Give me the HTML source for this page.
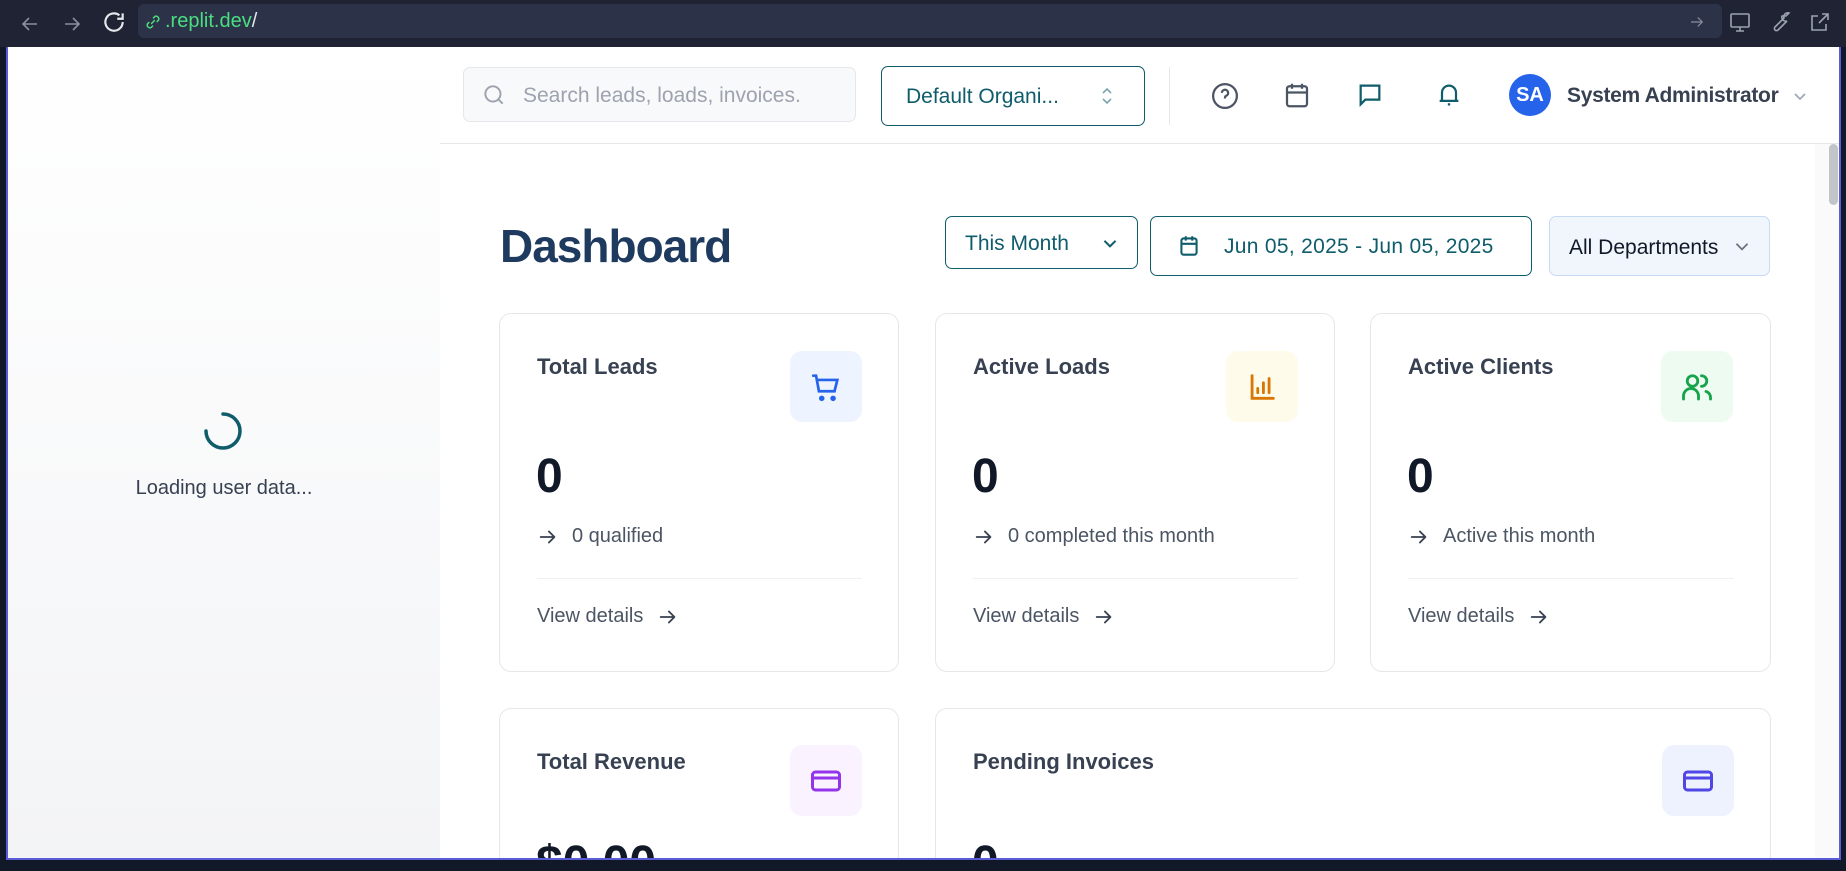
<!DOCTYPE html>
<html><head><meta charset="utf-8"><style>
*{box-sizing:border-box;margin:0;padding:0}
html,body{width:1846px;height:871px;overflow:hidden}
body{background:#111827;font-family:"Liberation Sans",sans-serif;position:relative}
.abs{position:absolute}
#chrome{left:0;top:0;width:1846px;height:47px;background:#1f2333}
#url{left:138px;top:4px;width:1584px;height:34px;background:#2c3247;border-radius:6px}
#page{left:6px;top:47px;width:1835px;height:813px;background:#fff;border-left:2px solid #5b5bd6;border-right:2px solid #5b5bd6;border-bottom:2px solid #5b5bd6;overflow:hidden}
#left{left:0;top:0;width:432px;height:813px;background:linear-gradient(#fff,#f3f4f6)}
.card{position:absolute;background:#fff;border:1px solid #e5e7eb;border-radius:12px}
.ct{position:absolute;left:37px;top:40px;font-size:22px;font-weight:bold;color:#374151}
.ib{position:absolute;width:72px;height:71px;border-radius:12px;display:flex;align-items:center;justify-content:center}
.num{position:absolute;left:36px;top:135px;font-size:48px;font-weight:bold;color:#111827}
.sub{position:absolute;left:37px;top:211px;font-size:20px;color:#4b5563;display:flex;align-items:center}
.hr{position:absolute;left:37px;right:36px;top:264px;border-top:1px solid #eef0f2}
.vd{position:absolute;left:37px;top:291px;font-size:20px;color:#4b5563;display:flex;align-items:center}
.txt{white-space:nowrap}
.ar{width:22px;height:22px}
</style></head><body>
<svg width="0" height="0" style="position:absolute"><defs><symbol id="arr" viewBox="0 0 24 24"><path d="M4 12h15M13 6l6 6-6 6" fill="none" stroke="#374151" stroke-width="2" stroke-linecap="round" stroke-linejoin="round"/></symbol></defs></svg>
<div id="chrome" class="abs"></div>
<div id="url" class="abs"></div>
<svg class="abs" style="left:18px;top:12px" width="24" height="24" viewBox="0 0 24 24" fill="none" stroke="#8a8fa0" stroke-width="1.6"><path d="M19 12H5M11 6l-6 6 6 6"/></svg>
<svg class="abs" style="left:60px;top:12px" width="24" height="24" viewBox="0 0 24 24" fill="none" stroke="#8a8fa0" stroke-width="1.6"><path d="M5 12h14M13 6l6 6-6 6"/></svg>
<svg class="abs" style="left:101px;top:9px" width="26" height="26" viewBox="0 0 24 24" fill="none" stroke="#e5e7eb" stroke-width="2"><path d="M20 12a8 8 0 1 1-3-6.2M20 4v5h-5"/></svg>
<svg class="abs" style="left:142px;top:11px" width="22" height="22" viewBox="0 0 24 24" fill="none" stroke="#4ade80" stroke-width="1.6"><path d="M10 14l4-4M8 12l-2 2a3 3 0 0 0 4 4l2-2M16 12l2-2a3 3 0 0 0-4-4l-2 2"/></svg>
<div class="abs txt" style="left:165px;top:10px;font-size:20px;color:#4ade80">.replit.dev<span style="color:#e5e7eb">/</span></div>
<svg class="abs" style="left:1688px;top:13px" width="18" height="18" viewBox="0 0 24 24" fill="none" stroke="#8a8fa0" stroke-width="1.6"><path d="M4 12h15M13 6l6 6-6 6"/></svg>
<svg class="abs" style="left:1728px;top:10px" width="24" height="24" viewBox="0 0 24 24" fill="none" stroke="#9ca3af" stroke-width="1.6"><rect x="3" y="4" width="18" height="13" rx="1"/><path d="M12 17v4M8 21h8"/></svg>
<svg class="abs" style="left:1768px;top:10px" width="24" height="24" viewBox="0 0 24 24" fill="none" stroke="#9ca3af" stroke-width="1.6"><path d="M14 6a4 4 0 0 0 5 5l-9 9a2 2 0 0 1-3-3l9-9a4 4 0 0 1 5-5l-3 3z"/></svg>
<svg class="abs" style="left:1808px;top:10px" width="24" height="24" viewBox="0 0 24 24" fill="none" stroke="#9ca3af" stroke-width="1.6"><path d="M14 4h6v6M20 4l-9 9M18 14v6H4V6h6"/></svg>

<div id="page" class="abs">
 <div id="left" class="abs"></div>
 <svg class="abs" style="left:194px;top:363px" width="42" height="42" viewBox="0 0 42 42" fill="none" stroke="#0f5c6b" stroke-width="3.5" stroke-linecap="round"><path d="M21 4a17 17 0 1 1-17 17"/></svg>
 <div class="abs txt" style="left:0;width:432px;text-align:center;top:430px;font-size:20px;color:#374151">Loading user data...</div>

 <div class="abs" style="left:432px;top:96px;width:1400px;border-top:1px solid #e5e7eb"></div>
 <div class="abs" style="left:455px;top:20px;width:393px;height:55px;background:#f8f9fb;border:1px solid #e5e7eb;border-radius:7px"></div>
 <svg class="abs" style="left:473px;top:35px" width="26" height="26" viewBox="0 0 24 24" fill="none" stroke="#9ca3af" stroke-width="1.8"><circle cx="11" cy="11" r="7"/><path d="M16 16l4 4"/></svg>
 <div class="abs txt" style="left:515px;top:37px;font-size:21px;color:#9ca3af">Search leads, loads, invoices.</div>
 <div class="abs" style="left:873px;top:19px;width:264px;height:60px;border:1.5px solid #0f5c6b;border-radius:7px"></div>
 <div class="abs txt" style="left:898px;top:38px;font-size:21px;color:#0f5c6b">Default Organi...</div>
 <svg class="abs" style="left:1090px;top:37px" width="18" height="24" viewBox="0 0 18 24" fill="none" stroke="#7aa5ae" stroke-width="1.6"><path d="M5 9l4-4 4 4M5 15l4 4 4-4"/></svg>
 <div class="abs" style="left:1161px;top:20px;height:58px;border-left:1px solid #e5e7eb"></div>
 <svg class="abs" style="left:1202px;top:34px" width="30" height="30" viewBox="0 0 24 24" fill="none" stroke="#4b5563" stroke-width="1.8"><circle cx="12" cy="12" r="9.5"/><path d="M9.5 9.5a2.5 2.5 0 1 1 3.5 2.3c-.7.3-1 .8-1 1.5v.7M12 17h.01"/></svg>
 <svg class="abs" style="left:1274px;top:33px" width="30" height="30" viewBox="0 0 24 24" fill="none" stroke="#4b5563" stroke-width="1.8"><rect x="4" y="5" width="16" height="16" rx="2"/><path d="M4 10h16M8 3v4M16 3v4"/></svg>
 <svg class="abs" style="left:1348px;top:34px" width="28" height="28" viewBox="0 0 24 24" fill="none" stroke="#0f5c6b" stroke-width="1.9"><path d="M4 4h16v12H8l-4 4z"/></svg>
 <svg class="abs" style="left:1427px;top:34px" width="28" height="28" viewBox="0 0 24 24" fill="none" stroke="#0f5c6b" stroke-width="1.9"><path d="M6 17V10a6 6 0 0 1 12 0v7H6zM4 17h16M11 20h2"/></svg>
 <div class="abs" style="left:1501px;top:27px;width:42px;height:42px;border-radius:50%;background:#2563eb;color:#fff;font-size:20px;font-weight:bold;text-align:center;line-height:42px">SA</div>
 <div class="abs txt" style="left:1559px;top:37px;font-size:21px;font-weight:bold;color:#374151;letter-spacing:-0.3px">System Administrator</div>
 <svg class="abs" style="left:1783px;top:40px" width="18" height="18" viewBox="0 0 18 18" fill="none" stroke="#9ca3af" stroke-width="1.6"><path d="M4 7l5 5 5-5"/></svg>
 <div class="abs" style="left:1807px;top:97px;width:24px;height:716px;background:#fafafa"></div>
 <div class="abs" style="left:1821px;top:97px;width:9px;height:61px;background:#c1c4c8;border-radius:5px"></div>

 <div class="abs txt" style="left:492px;top:172px;font-size:46px;font-weight:bold;color:#1e3a5f;letter-spacing:-1px">Dashboard</div>
 <div class="abs" style="left:937px;top:169px;width:193px;height:53px;border:1.5px solid #0f5c6b;border-radius:7px"></div>
 <div class="abs txt" style="left:957px;top:185px;font-size:21px;color:#0f5c6b">This Month</div>
 <svg class="abs" style="left:1092px;top:186px" width="20" height="20" viewBox="0 0 18 18" fill="none" stroke="#0f5c6b" stroke-width="1.8"><path d="M4 7l5 5 5-5"/></svg>
 <div class="abs" style="left:1142px;top:169px;width:382px;height:60px;border:1.5px solid #0f5c6b;border-radius:7px"></div>
 <svg class="abs" style="left:1168px;top:186px" width="26" height="26" viewBox="0 0 24 24" fill="none" stroke="#0f5c6b" stroke-width="1.9"><rect x="5" y="5" width="14" height="15" rx="2"/><path d="M5 10h14M9 3v4M15 3v4"/></svg>
 <div class="abs txt" style="left:1216px;top:188px;font-size:21px;color:#0f5c6b;letter-spacing:0.3px">Jun 05, 2025 - Jun 05, 2025</div>
 <div class="abs" style="left:1541px;top:169px;width:221px;height:60px;background:#f1f6fd;border:1px solid #c7daf3;border-radius:7px"></div>
 <div class="abs txt" style="left:1561px;top:189px;font-size:21px;color:#111827">All Departments</div>
 <svg class="abs" style="left:1724px;top:189px" width="20" height="20" viewBox="0 0 18 18" fill="none" stroke="#6b7280" stroke-width="1.6"><path d="M4 7l5 5 5-5"/></svg>

 <div class="card" style="left:491px;top:266px;width:400px;height:359px">
  <div class="ct">Total Leads</div>
  <div class="ib" style="left:290px;top:37px;background:#eef4ff"><svg width="34" height="34" viewBox="0 0 24 24" fill="none" stroke="#2563eb" stroke-width="1.9" stroke-linecap="round"><path d="M3 4h2l2 11h11l2-8H6"/><circle cx="9" cy="20" r="1" fill="#2563eb"/><circle cx="17" cy="20" r="1" fill="#2563eb"/></svg></div>
  <div class="num">0</div>
  <div class="sub txt"><svg class="ar"><use href="#arr"/></svg><span style="margin-left:13px">0 qualified</span></div>
  <div class="hr"></div>
  <div class="vd txt">View details<svg class="ar" style="margin-left:14px"><use href="#arr"/></svg></div>
 </div>
 <div class="card" style="left:927px;top:266px;width:400px;height:359px">
  <div class="ct">Active Loads</div>
  <div class="ib" style="left:290px;top:37px;background:#fefbeb"><svg width="34" height="34" viewBox="0 0 24 24" fill="none" stroke="#d97706" stroke-width="2" stroke-linecap="round"><path d="M5 4v16h15M9 16v-3M13 16V9M17 16V6"/></svg></div>
  <div class="num">0</div>
  <div class="sub txt"><svg class="ar"><use href="#arr"/></svg><span style="margin-left:13px">0 completed this month</span></div>
  <div class="hr"></div>
  <div class="vd txt">View details<svg class="ar" style="margin-left:14px"><use href="#arr"/></svg></div>
 </div>
 <div class="card" style="left:1362px;top:266px;width:401px;height:359px">
  <div class="ct">Active Clients</div>
  <div class="ib" style="left:290px;top:37px;background:#eefbf1"><svg width="36" height="36" viewBox="0 0 24 24" fill="none" stroke="#16a34a" stroke-width="1.9" stroke-linecap="round"><circle cx="9" cy="8" r="3.5"/><path d="M3 20v-2a5 5 0 0 1 10 0v2M15 4.5a3.5 3.5 0 0 1 0 7M18 15a4 4 0 0 1 3 4v1"/></svg></div>
  <div class="num">0</div>
  <div class="sub txt"><svg class="ar"><use href="#arr"/></svg><span style="margin-left:13px">Active this month</span></div>
  <div class="hr"></div>
  <div class="vd txt">View details<svg class="ar" style="margin-left:14px"><use href="#arr"/></svg></div>
 </div>
 <div class="card" style="left:491px;top:661px;width:400px;height:200px">
  <div class="ct">Total Revenue</div>
  <div class="ib" style="left:290px;top:36px;background:#faf3ff"><svg width="36" height="36" viewBox="0 0 24 24" fill="none" stroke="#9333ea" stroke-width="2"><rect x="3" y="6" width="18" height="12" rx="2"/><path d="M3 10h18"/></svg></div>
  <div class="num" style="top:127px">$0.00</div>
 </div>
 <div class="card" style="left:927px;top:661px;width:836px;height:200px">
  <div class="ct">Pending Invoices</div>
  <div class="ib" style="left:726px;top:36px;background:#eef2ff"><svg width="36" height="36" viewBox="0 0 24 24" fill="none" stroke="#4f46e5" stroke-width="2"><rect x="3" y="6" width="18" height="12" rx="2"/><path d="M3 10h18"/></svg></div>
  <div class="num" style="top:127px">0</div>
 </div>
</div>
</body></html>
